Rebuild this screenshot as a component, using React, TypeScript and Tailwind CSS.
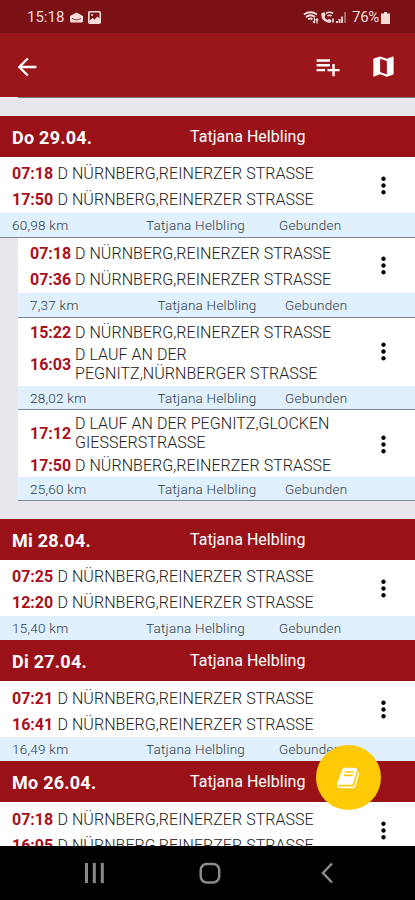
import { MdArrowBack, MdMap, MdMoreVert, MdPlaylistAdd } from "react-icons/md";

type Stop = { time: string; place: string[] };
type Trip = { stops: Stop[]; km: string; pad: string; foot?: string };
type Day = { date: string; trip: Trip; parts?: Trip[] };

const HOME = ["D NÜRNBERG,REINERZER STRASSE"];

const days: Day[] = [
  {
    date: "Do 29.04.",
    trip: {
      km: "60,98 km",
      pad: "h-14 pt-[3px]",
      stops: [
        { time: "07:18", place: HOME },
        { time: "17:50", place: HOME },
      ],
    },
    parts: [
      {
        km: "7,37 km",
        pad: "h-[55px] pt-0.5",
        stops: [
          { time: "07:18", place: HOME },
          { time: "07:36", place: HOME },
        ],
      },
      {
        km: "28,02 km",
        pad: "h-[68px] pt-px",
        foot: "h-[23px]",
        stops: [
          { time: "15:22", place: HOME },
          { time: "16:03", place: ["D LAUF AN DER", "PEGNITZ,NÜRNBERGER STRASSE"] },
        ],
      },
      {
        km: "25,60 km",
        pad: "h-[67px] pt-1",
        foot: "h-[23px]",
        stops: [
          { time: "17:12", place: ["D LAUF AN DER PEGNITZ,GLOCKEN", "GIESSERSTRASSE"] },
          { time: "17:50", place: HOME },
        ],
      },
    ],
  },
  {
    date: "Mi 28.04.",
    trip: {
      km: "15,40 km",
      pad: "h-14 pt-[3px]",
      stops: [
        { time: "07:25", place: HOME },
        { time: "12:20", place: HOME },
      ],
    },
  },
  {
    date: "Di 27.04.",
    trip: {
      km: "16,49 km",
      pad: "h-14 pt-1",
      stops: [
        { time: "07:21", place: HOME },
        { time: "16:41", place: HOME },
      ],
    },
  },
  {
    date: "Mo 26.04.",
    trip: {
      km: "",
      pad: "h-14 pt-1",
      stops: [
        { time: "07:18", place: HOME },
        { time: "16:05", place: HOME },
      ],
    },
  },
];

export default function App() {
  return (
    <div className="relative flex h-[900px] w-[415px] flex-col overflow-hidden bg-[#e8e7ed] font-[Roboto,sans-serif]">
      <StatusBar />

      {/* App bar */}
      <header className="flex h-16 shrink-0 items-center bg-[#9b161a] pl-[13px] pr-[18px] text-white">
        <MdArrowBack className="mt-1 size-[28px]" />
        <MdPlaylistAdd className="ml-auto mt-[3px] size-[29px]" />
        <MdMap className="ml-[28px] mt-[3px] size-[27px]" />
      </header>
      <div className="flex h-px shrink-0 bg-[#85797e]">
        <div className="w-[18px] bg-white" />
      </div>

      {/* Trip list */}
      <main className="min-h-0 flex-1 overflow-hidden pt-[18px]">
        {days.map((day) => (
          <section key={day.date}>
            <DayHeader date={day.date} />
            <TripCard trip={day.trip} last={!day.parts} />
            {day.parts && (
              <div className="mb-[18px] pl-[18px]">
                {day.parts.map((part) => (
                  <TripCard key={part.km} trip={part} nested />
                ))}
              </div>
            )}
          </section>
        ))}
      </main>

      <NavBar />

      <button className="absolute left-[316px] top-[745px] flex size-[65px] items-center justify-center rounded-full bg-[#fdca05] text-white">
        <BookIcon />
      </button>
    </div>
  );
}

function DayHeader({ date }: { date: string }) {
  return (
    <div className="flex h-[41px] items-center bg-[#9a1218] pl-3 text-white">
      <h2 className="w-[178px] pt-0.5 text-[18px] font-bold leading-6 tracking-[0.25px]">{date}</h2>
      <span className="text-[16px] leading-5 tracking-[0.03px]">Tatjana Helbling</span>
    </div>
  );
}

function TripCard({ trip, nested = false, last = false }: { trip: Trip; nested?: boolean; last?: boolean }) {
  return (
    <article className="bg-white">
      <div className={`flex pl-3 ${trip.pad}`}>
        <div className="flex-1">
          {trip.stops.map((stop, i) => (
            <div key={i} className="flex min-h-[26px] items-center">
              <span
                className={`shrink-0 text-[16px] font-bold leading-[19px] text-[#a9101b] ${
                  nested ? "w-[45px]" : "w-[45.5px]"
                }`}
              >
                {stop.time}
              </span>
              <div className="whitespace-nowrap text-[16px] font-light leading-[19px] tracking-[0.04px] text-[#202020]">
                {stop.place.map((line) => (
                  <div key={line}>{line}</div>
                ))}
              </div>
            </div>
          ))}
        </div>
        <MdMoreVert className="mb-[3px] mr-[18px] size-[27px] self-center text-black" />
      </div>
      <div
        className={`box-content flex items-center bg-[#e0f0fd] pl-3 text-[13.5px] font-light leading-4 tracking-[0.24px] text-[#2f3a46] ${
          trip.foot ?? "h-6"
        } ${last ? "" : "border-b border-[#7d8890]"}`}
      >
        <span className={nested ? "w-[127.500px]" : "w-[134px]"}>{trip.km}</span>
        <span className={nested ? "w-[127.500px]" : "w-[133px]"}>Tatjana Helbling</span>
        {trip.km && <span>Gebunden</span>}
      </div>
    </article>
  );
}

function StatusBar() {
  return (
    <div className="flex h-[33px] shrink-0 items-center bg-[#7a1115] pl-[27px] pr-[25px] pt-0.5 text-[#f5dcd8]">
      <span className="w-[43px] text-[15px]">15:18</span>
      <svg className="h-[11px] w-[13px]" viewBox="0 0 13 11" fill="currentColor">
        <path d="M6.500 0.500 13 4V9Q13 10.500 11.500 10.500H1.500Q0 10.500 0 9V4Z" />
        <path d="M2 6.300Q6.500 9.500 11 6.300" fill="none" stroke="#7a1115" strokeWidth="0.800" />
      </svg>
      <svg className="ml-[5px] size-[13px]" viewBox="0 0 13 13" fill="none" stroke="currentColor">
        <rect x="0.800" y="0.800" width="11.400" height="11.400" rx="1" strokeWidth="1.600" />
        <path d="M1.500 11V9.500L4.500 7 6.500 8.500 9.500 5.500 12 8V12H1.500Z" fill="currentColor" stroke="none" />
        <circle cx="4" cy="4" r="1" fill="currentColor" stroke="none" />
      </svg>

      {/* Wifi, wifi calling, signal */}
      <svg className="ml-auto h-[13px] w-[44px]" viewBox="0 0 44 13" fill="none" stroke="currentColor">
        <path d="M1 3.500Q7.500-1 14 3.500M3 6Q7.500 2.500 12 6M5.200 8.300Q7.500 6.500 9.500 8.300" strokeWidth="1.900" />
        <path d="M11.500 7V12M9.800 10.300 11.500 12M14 12.500V8M12.700 9.300 14 8 15.300 9.300" strokeWidth="1.300" />
        <path
          d="M18.500 2Q17.500 7 21.500 10 24.500 12.500 28 11.500L28.500 9 26 7.800 24.500 9Q22 7.500 21.500 5.500L22.700 4 21.500 1.300Z"
          fill="currentColor"
          stroke="none"
        />
        <path d="M23 2.500Q26.500 0 30 2.500M24.500 5Q26.500 3.500 28.500 5M30 7.500V11.500" strokeWidth="1.600" />
        <path d="M34 12V10M36.500 12V8M39 12V5.500" strokeWidth="1.800" />
        <path d="M42 12V1" strokeWidth="1.800" opacity="0.450" />
      </svg>
      <span className="ml-[5px] text-[15px] tracking-[-0.3px]">76%</span>
      <svg className="ml-0.5 h-3 w-[9px]" viewBox="0 0 9 12" fill="currentColor">
        <path d="M3 0H6V1.500H9V12H0V1.500H3Z" />
      </svg>
    </div>
  );
}

function NavBar() {
  return (
    <nav className="flex h-[54px] shrink-0 items-center bg-black pl-[84px]">
      <svg className="h-[22px] w-[250px]" viewBox="0 0 250 22" fill="none" stroke="#8a8a8a" strokeWidth="2.500">
        <path d="M2.500 1V21M10.300 1V21M18.300 1V21" strokeWidth="3" />
        <rect x="116.700" y="2" width="18.500" height="18.500" rx="6" />
        <path d="M248 1.500 239 11 248 20.500" />
      </svg>
    </nav>
  );
}

function BookIcon() {
  return (
    <svg className="ml-px size-[24px]" viewBox="0 0 1792 1792" fill="currentColor">
      <path d="M1639 478q40 57 18 129l-275 906q-19 64-76.500 107.500t-122.500 43.500h-923q-77 0-148.500-53.500t-99.500-131.500q-24-67-2-127 0-4 3-27t4-37q1-8-3-21.500t-3-19.500q2-11 8-21t16.500-23.500 16.500-23.500q23-38 45-91.500t30-91.500q3-10 .5-30t-.5-28q3-11 17-28t17-23q21-36 42-92t25-90q1-9-2.500-32t.5-28q4-13 22-30.500t22-22.500q19-26 42.500-84.500t27.500-96.500q1-8-3-25.500t-2-26.500q2-8 9-18t18-23 17-21q8-12 16.500-30.500t15-35 16-36 19.500-32 26.500-23.500 36-11.500 47.500 5.500l-1 3q38-9 51-9h761q74 0 114 56t18 130l-274 906q-36 119-71.500 153.500t-128.500 34.500h-869q-27 0-38 15-11 16-1 43 24 70 144 70h923q29 0 56-15.500t35-41.500l300-987q7-22 5-57 38 15 59 43zm-1064 2q-4 13 2 22.500t20 9.500h608q13 0 25.500-9.500t16.500-22.500l21-64q4-13-2-22.500t-20-9.500h-608q-13 0-25.500 9.500t-16.500 22.500zm-83 256q-4 13 2 22.500t20 9.500h608q13 0 25.500-9.500t16.500-22.500l21-64q4-13-2-22.500t-20-9.500h-608q-13 0-25.500 9.500t-16.500 22.500z" />
    </svg>
  );
}
